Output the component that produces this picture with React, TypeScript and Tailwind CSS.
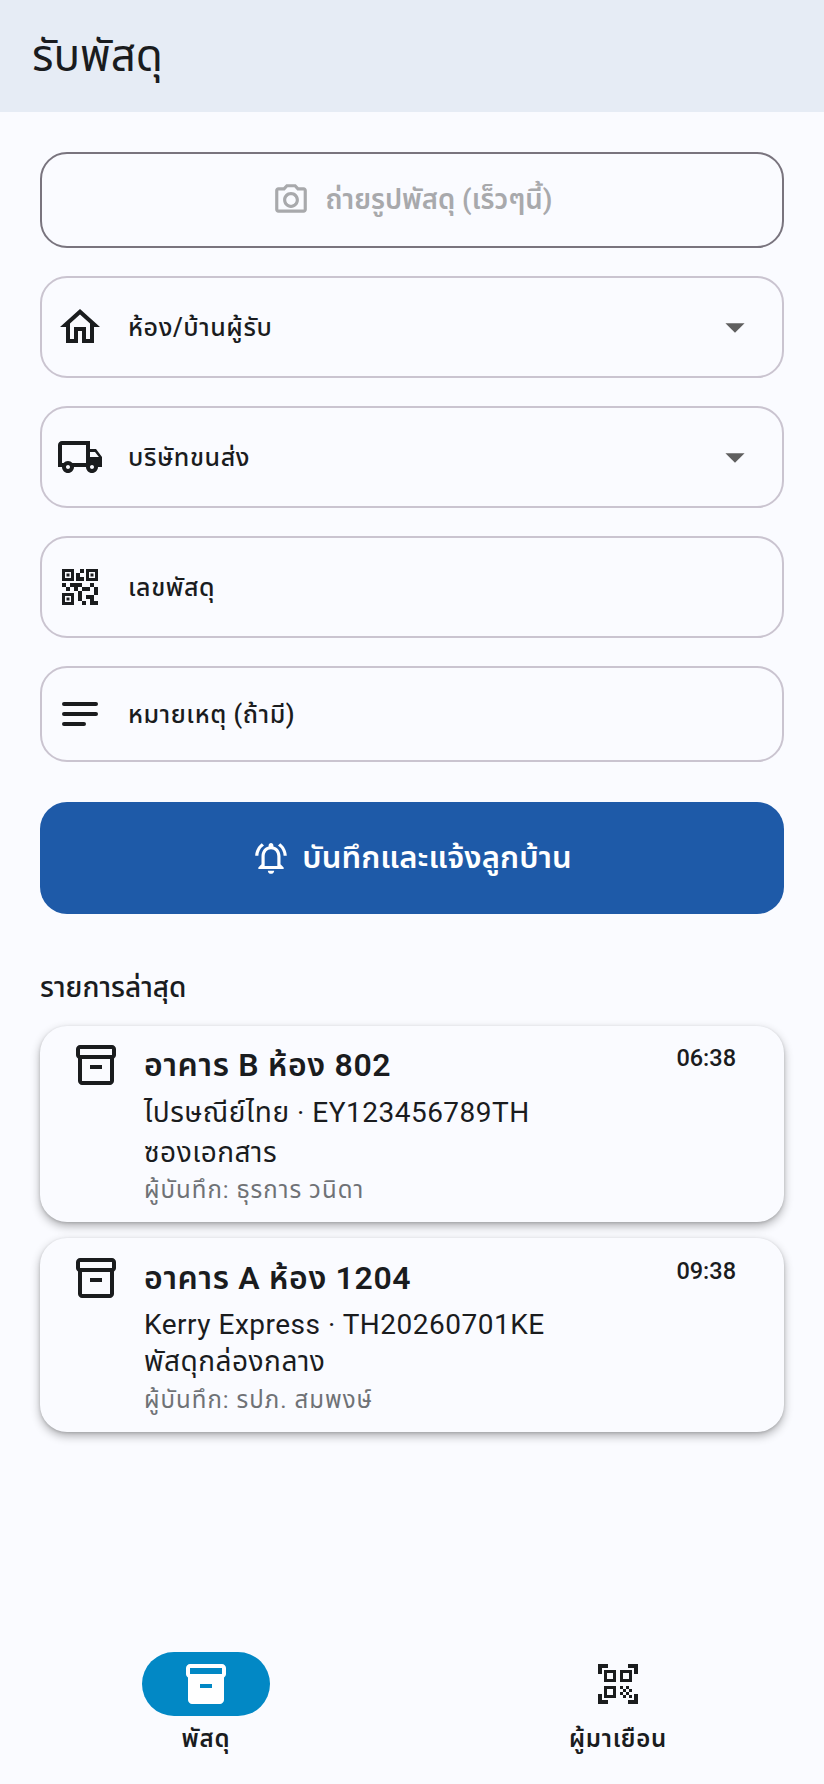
import React from "react";
import {
  MdOutlineHome, MdOutlineLocalShipping, MdQrCode2, MdOutlineInventory2, MdInventory2,
  MdQrCodeScanner, MdOutlineNotificationsActive, MdOutlinePhotoCamera, MdArrowDropDown,
} from "react-icons/md";

function NotesIcon() {
  return (
    <svg width="48" height="48" viewBox="0 0 24 24" fill="none" stroke="currentColor" strokeWidth="2" strokeLinecap="round" className="shrink-0">
      <path d="M4 7H20M4 12H20M4 17H14" />
    </svg>
  );
}

function Field({ icon, label, dropdown, h }: { icon: React.ReactNode; label: string; dropdown?: boolean; h: string }) {
  return (
    <div className={`${h} flex items-center rounded-[27px] border-2 border-[#cac4d0] pl-[14px] pr-[24px]`}>
      <div className="flex w-[48px] shrink-0 justify-center text-[#1a1c1e]">{icon}</div>
      <div className="ml-[24px] flex-1 pt-[1px] text-[25px] font-medium tracking-[0.6px] text-[#1a1c1e]">{label}</div>
      {dropdown && <MdArrowDropDown size={46} className="shrink-0 text-[#5f5f5f]" />}
    </div>
  );
}

function Card({ title, time, line1, line2, by, h, pt, l1, l2, l3 }: { title: string; time: string; line1: string; line2: string; by: string; h: string; pt: string; l1: string; l2: string; l3: string }) {
  return (
    <div className={`${h} ${pt} flex rounded-[27px] bg-[#fafbff] pl-[32px] pr-[48px] shadow-[0_4px_10px_rgba(0,0,0,0.3),0_1px_3px_rgba(0,0,0,0.14)]`}>
      <MdOutlineInventory2 size={48} className="shrink-0 text-[#1a1c1e]" />
      <div className="ml-[24px] min-w-0 flex-1">
        <div className="text-[32px] font-semibold leading-[48px] tracking-[0.65px] text-[#1a1c1e]">{title}</div>
        <div className={`${l1} mt-[4px] text-[28px] tracking-[0.5px] text-[#1a1c1e]`}>{line1}</div>
        <div className={`${l2} text-[28px] tracking-[0.5px] text-[#1a1c1e]`}>{line2}</div>
        <div className={`${l3} text-[24px] tracking-[1px] text-[#6f7276]`}>{by}</div>
      </div>
      <div className="mt-[1px] text-[23.5px] font-medium leading-[32px] text-[#1a1c1e]">{time}</div>
    </div>
  );
}

export default function App() {
  return (
    <div className="flex h-[1784px] w-[824px] flex-col overflow-hidden bg-[#fafbff] font-['Roboto','Noto_Sans','Noto_Sans_Thai',sans-serif]">
      <header className="flex h-[112px] shrink-0 items-center bg-[#e6ecf5] pl-[32px]">
        <h1 className="text-[44px] font-normal text-[#1a1c1e]">รับพัสดุ</h1>
      </header>

      <main className="flex flex-1 flex-col px-[40px] pt-[40px]">
        <div className="flex h-[96px] items-center justify-center gap-[16px] rounded-[27px] border-2 border-[#79747e] text-[#a8a9ac]">
          <MdOutlinePhotoCamera size={38} className="shrink-0" />
          <span className="text-[27.5px] font-semibold">ถ่ายรูปพัสดุ (เร็วๆนี้)</span>
        </div>

        <div className="mt-[28px] flex flex-col gap-[28px]">
          <Field h="h-[102px]" icon={<MdOutlineHome size={48} className="shrink-0" />} label="ห้อง/บ้านผู้รับ" dropdown />
          <Field h="h-[102px]" icon={<MdOutlineLocalShipping size={48} className="shrink-0" />} label="บริษัทขนส่ง" dropdown />
          <Field h="h-[102px]" icon={<MdQrCode2 size={48} className="shrink-0" />} label="เลขพัสดุ" />
          <Field h="h-[96px]" icon={<NotesIcon />} label="หมายเหตุ (ถ้ามี)" />
        </div>

        <button className="mt-[40px] flex h-[112px] items-center justify-center gap-[12px] rounded-[27px] bg-[#1e5aa8] text-white">
          <MdOutlineNotificationsActive size={38} className="shrink-0" />
          <span className="text-[31px] font-semibold tracking-[0.1px]">บันทึกและแจ้งลูกบ้าน</span>
        </button>

        <h2 className="mt-[56px] text-[28px] font-medium leading-[36px] text-[#1a1c1e]">รายการล่าสุด</h2>

        <div className="mt-[20px] flex flex-col gap-[16px]">
          <Card h="h-[196px]" pt="pt-[15px]" l1="leading-[40px]" l2="leading-[40px]" l3="leading-[34px]" title="อาคาร B ห้อง 802" time="06:38" line1="ไปรษณีย์ไทย · EY123456789TH" line2="ซองเอกสาร" by="ผู้บันทึก: ธุรการ วนิดา" />
          <Card h="h-[194px]" pt="pt-[16px]" l1="leading-[38px]" l2="leading-[36px]" l3="leading-[40px]" title="อาคาร A ห้อง 1204" time="09:38" line1="Kerry Express · TH20260701KE" line2="พัสดุกล่องกลาง" by="ผู้บันทึก: รปภ. สมพงษ์" />
        </div>
      </main>

      <nav className="flex h-[132px] shrink-0">
        <div className="flex flex-1 flex-col items-center">
          <div className="flex h-[64px] w-[128px] items-center justify-center rounded-full bg-[#0288c5] text-white">
            <MdInventory2 size={48} />
          </div>
          <div className="mt-[5px] text-[24px] font-semibold leading-[36px] tracking-[0.8px] text-[#1a1c1e]">พัสดุ</div>
        </div>
        <div className="flex flex-1 flex-col items-center">
          <div className="flex h-[64px] w-[128px] items-center justify-center text-[#1a1c1e]">
            <MdQrCodeScanner size={48} />
          </div>
          <div className="mt-[5px] text-[24px] font-semibold leading-[36px] tracking-[0.8px] text-[#1a1c1e]">ผู้มาเยือน</div>
        </div>
      </nav>
    </div>
  );
}
